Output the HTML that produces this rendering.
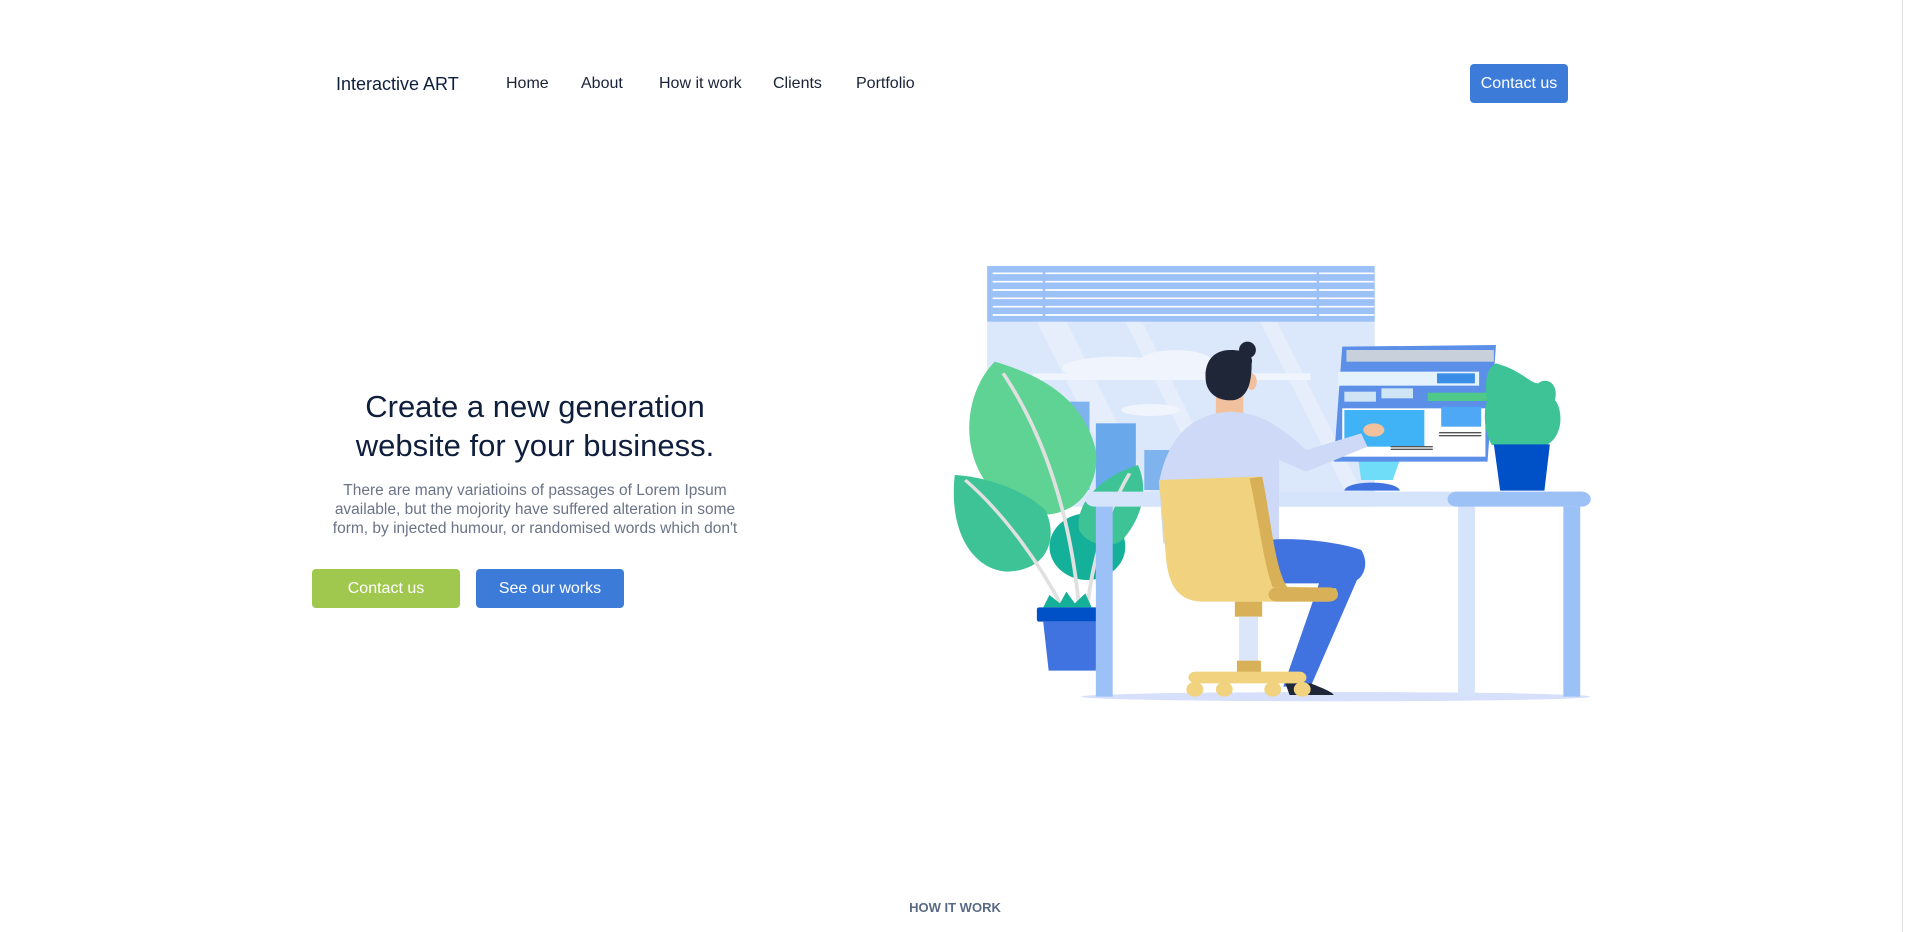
<!DOCTYPE html>
<html><head><meta charset="utf-8"><style>
html,body{margin:0;padding:0;background:#fff;width:1906px;height:932px;overflow:hidden;font-family:"Liberation Sans",sans-serif;position:relative}
.a{position:absolute;white-space:nowrap}
.nav{color:#1a2238;font-size:16px;top:75px}
.btn{position:absolute;color:#fff;font-size:16px;text-align:center;border-radius:4px}
</style></head><body>
<div class="a" style="left:336px;top:74px;font-size:18px;color:#0f1e3d">Interactive ART</div>
<div class="a nav" style="left:506px">Home</div>
<div class="a nav" style="left:581px">About</div>
<div class="a nav" style="left:659px">How it work</div>
<div class="a nav" style="left:773px">Clients</div>
<div class="a nav" style="left:856px">Portfolio</div>
<div class="btn" style="left:1470px;top:64px;width:98px;height:39px;line-height:39px;background:#3d7bd9">Contact us</div>

<div class="a" style="left:285px;width:500px;top:387px;text-align:center;font-size:31px;line-height:39px;color:#0f1e3d;white-space:normal">Create a new generation<br>website for your business.</div>
<div class="a" style="left:285px;width:500px;top:481px;text-align:center;font-size:15.5px;line-height:19px;color:#6b7387;white-space:normal">There are many variatioins of passages of Lorem Ipsum<br>available, but the mojority have suffered alteration in some<br>form, by injected humour, or randomised words which don't</div>
<div class="btn" style="left:312px;top:569px;width:148px;height:39px;line-height:39px;background:#a0c84f">Contact us</div>
<div class="btn" style="left:476px;top:569px;width:148px;height:39px;line-height:39px;background:#3d7bd9">See our works</div>

<div class="a" style="left:0;width:1906px;text-align:center;top:900px;font-size:13px;color:#5a6a85;font-weight:bold;padding-left:2px">HOW IT WORK</div>
<div class="a" style="left:1902px;top:0;width:1px;height:932px;background:#ddd"></div>

<svg style="position:absolute;left:940px;top:250px" width="660" height="460" viewBox="0 0 1567 1380" preserveAspectRatio="none">
<rect x="112" y="48" width="920" height="722" fill="#dbe7fb"/>
<polygon points="230,215 300,215 520,770 450,770" fill="#e6eefc"/>
<polygon points="440,215 480,215 700,770 660,770" fill="#e6eefc"/>
<polygon points="760,215 800,215 1020,770 980,770" fill="#e6eefc"/>
<ellipse cx="420" cy="355" rx="130" ry="35" fill="#f0f5fd"/>
<ellipse cx="560" cy="340" rx="90" ry="40" fill="#f0f5fd"/>
<rect x="220" y="370" width="660" height="20" fill="#f0f5fd"/>
<ellipse cx="500" cy="480" rx="70" ry="18" fill="#f0f5fd"/>
<rect x="290" y="455" width="65" height="265" fill="#7fb3ee"/>
<rect x="370" y="520" width="95" height="200" fill="#6aa8ec"/>
<rect x="485" y="600" width="70" height="120" fill="#7fb3ee"/>
<rect x="112" y="48" width="920" height="167" fill="#9cc1f7"/>
<g stroke="#fff" stroke-width="5"><line x1="125" y1="70" x2="1030" y2="70"/><line x1="125" y1="95" x2="1030" y2="95"/><line x1="125" y1="120" x2="1030" y2="120"/><line x1="125" y1="145" x2="1030" y2="145"/><line x1="125" y1="170" x2="1030" y2="170"/><line x1="125" y1="195" x2="1030" y2="195"/></g>
<g stroke="#9cc1f7" stroke-width="6"><line x1="247" y1="60" x2="247" y2="200"/><line x1="897" y1="60" x2="897" y2="200"/></g>
<path d="M130,335 C40,450 40,700 200,790 C330,820 380,700 370,600 C340,450 250,380 130,335Z" fill="#5fd394"/>
<ellipse cx="350" cy="890" rx="90" ry="100" fill="#14b09a"/>
<path d="M35,675 C20,850 80,960 160,965 C260,960 280,860 250,780 C200,720 110,680 35,675Z" fill="#3dc395"/>
<path d="M470,645 C380,680 320,760 330,840 C350,890 420,900 440,860 C490,780 490,700 470,645Z" fill="#3dc395"/>
<g stroke="#e0e0e0" stroke-width="9" fill="none"><path d="M150,370 C250,560 310,800 330,1070"/><path d="M60,690 C160,800 240,950 290,1070"/><path d="M450,670 C390,800 360,950 350,1070"/></g>
<path d="M245,1072 L260,1035 L285,1060 L300,1025 L320,1060 L345,1030 L360,1072Z" fill="#14b09a"/>
<rect x="230" y="1072" width="145" height="43" rx="6" fill="#0050c8"/>
<polygon points="245,1115 375,1115 370,1262 258,1262" fill="#4173e0"/>
<ellipse cx="940" cy="1340" rx="605" ry="14" fill="#d6e0fb"/>
<rect x="370" y="760" width="40" height="580" fill="#9cc1f7"/>
<rect x="1230" y="760" width="40" height="580" fill="#d6e4fb"/>
<rect x="1480" y="760" width="40" height="580" fill="#9cc1f7"/>
<rect x="345" y="725" width="1200" height="45" rx="22" fill="#d6e4fb"/>
<rect x="1205" y="725" width="340" height="45" rx="22" fill="#9cc1f7"/>
<polygon points="990,600 1100,600 1075,690 1000,690" fill="#6fdcf8"/>
<path d="M960,722 C965,690 1085,690 1092,722Z" fill="#4173e0"/>
<polygon points="955,290 1320,285 1300,635 935,635" fill="#5b8fe8"/>
<rect x="965" y="300" width="350" height="35" fill="#c8d0dc"/>
<rect x="945" y="365" width="335" height="42" fill="#e3f2fd"/>
<rect x="1180" y="370" width="90" height="30" fill="#3b8ee8"/>
<rect x="960" y="425" width="75" height="30" fill="#cfe5f5"/>
<rect x="1048" y="415" width="75" height="30" fill="#cfe5f5"/>
<rect x="1158" y="428" width="160" height="25" fill="#4fc98a"/>
<rect x="955" y="475" width="340" height="145" fill="#fff"/>
<rect x="960" y="480" width="190" height="110" fill="#3fb3f5"/>
<rect x="1190" y="470" width="95" height="60" fill="#4ea8f5"/>
<g stroke="#555" stroke-width="4"><line x1="1185" y1="548" x2="1285" y2="548"/><line x1="1185" y1="557" x2="1285" y2="557"/><line x1="1070" y1="590" x2="1170" y2="590"/><line x1="1070" y1="598" x2="1170" y2="598"/></g>
<path d="M1320,340 C1380,360 1400,400 1420,400 C1440,380 1470,400 1460,450 C1480,480 1480,560 1440,585 L1310,585 C1290,540 1290,480 1300,450 C1290,400 1300,350 1320,340Z" fill="#3dc395"/>
<polygon points="1315,583 1448,583 1435,722 1330,722" fill="#0050c8"/>
<rect x="655" y="430" width="65" height="65" fill="#f0c19c"/>
<ellipse cx="740" cy="395" rx="12" ry="25" fill="#f0c19c"/>
<path d="M520,700 C540,560 600,490 690,485 C760,490 800,520 870,600 L1000,550 L1015,590 L870,665 L805,630 L805,880 L530,880Z" fill="#cdd9f7"/>
<ellipse cx="1030" cy="540" rx="25" ry="20" fill="#f0c19c"/>
<path d="M690,300 C640,300 625,350 632,400 C640,440 670,455 700,450 C730,440 740,400 740,340 C745,320 730,300 690,300Z" fill="#1f2638"/>
<ellipse cx="730" cy="300" rx="20" ry="25" fill="#1f2638"/>
<path d="M780,870 C850,860 960,880 1000,900 C1020,940 1005,980 990,990 L880,1310 L815,1310 L900,1000 L780,1000Z" fill="#4173e0"/>
<path d="M820,1300 L880,1300 C910,1315 930,1325 935,1335 L830,1335Z" fill="#1f2638"/>
<path d="M520,690 L760,680 C780,800 790,960 820,1010 L940,1015 C950,1040 940,1055 920,1055 L620,1055 C560,1050 540,1000 535,900Z" fill="#f0d27f"/>
<path d="M735,685 L765,680 C785,800 795,960 825,1012 L790,1012 C770,950 755,800 735,685Z" fill="#d8b057"/>
<rect x="780" y="1012" width="165" height="43" rx="21" fill="#d8b057"/>
<rect x="700" y="1055" width="65" height="45" fill="#d8b057"/>
<rect x="710" y="1100" width="45" height="135" fill="#dce6fb"/>
<rect x="705" y="1232" width="57" height="35" fill="#d8b057"/>
<rect x="590" y="1265" width="280" height="35" rx="17" fill="#f0d27f"/>
<g fill="#f0d27f"><ellipse cx="605" cy="1318" rx="20" ry="22"/><ellipse cx="675" cy="1318" rx="20" ry="22"/><ellipse cx="790" cy="1318" rx="20" ry="22"/><ellipse cx="860" cy="1318" rx="20" ry="22"/></g>
</svg>
</body></html>
